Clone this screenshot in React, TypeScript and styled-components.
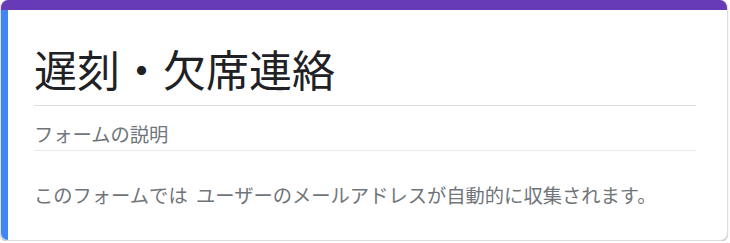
import styled, { createGlobalStyle } from "styled-components";

const GlobalStyle = createGlobalStyle`
  html, body {
    margin: 0;
    padding: 0;
    background: #ffffff;
  }
  body {
    font-family: "Noto Sans CJK JP", "Noto Sans", sans-serif;
  }
`;

const Card = styled.div`
  width: 728px;
  height: 241px;
  box-sizing: border-box;
  background: #ffffff;
  border: 1px solid #dadce0;
  border-top: none;
  border-radius: 8px;
  box-shadow: 0 1px 1px rgba(60, 64, 67, 0.35);
  overflow: hidden;
  display: flex;
  flex-direction: column;
`;

const TopBar = styled.div`
  height: 10px;
  background: #673ab7;
  flex-shrink: 0;
`;

const Body = styled.div`
  flex: 1;
  display: flex;
`;

const SideBar = styled.div`
  width: 7px;
  background: #4285f4;
  flex-shrink: 0;
`;

const Content = styled.div`
  flex: 1;
  padding: 32px 31px 0 26px;
  display: flex;
  flex-direction: column;
`;

const Title = styled.div`
  font-size: 43px;
  line-height: 53px;
  color: #202124;
  padding-bottom: 10px;
  border-bottom: 1px solid #dadce0;
`;

const Description = styled.div`
  font-size: 19.3px;
  line-height: 24px;
  color: #70757a;
  padding: 16px 0 4px;
  border-bottom: 1px solid #e8eaed;
`;

const Notice = styled.div`
  font-size: 19.3px;
  line-height: 24px;
  color: #70757a;
  padding-top: 32px;
  word-spacing: 4px;
`;

export default function App() {
  return (
    <>
      <GlobalStyle />
      <Card>
        <TopBar />
        <Body>
          <SideBar />
          <Content>
            <Title>遅刻・欠席連絡</Title>
            <Description>フォームの説明</Description>
            <Notice>このフォームでは ユーザーのメールアドレスが自動的に収集されます。</Notice>
          </Content>
        </Body>
      </Card>
    </>
  );
}
